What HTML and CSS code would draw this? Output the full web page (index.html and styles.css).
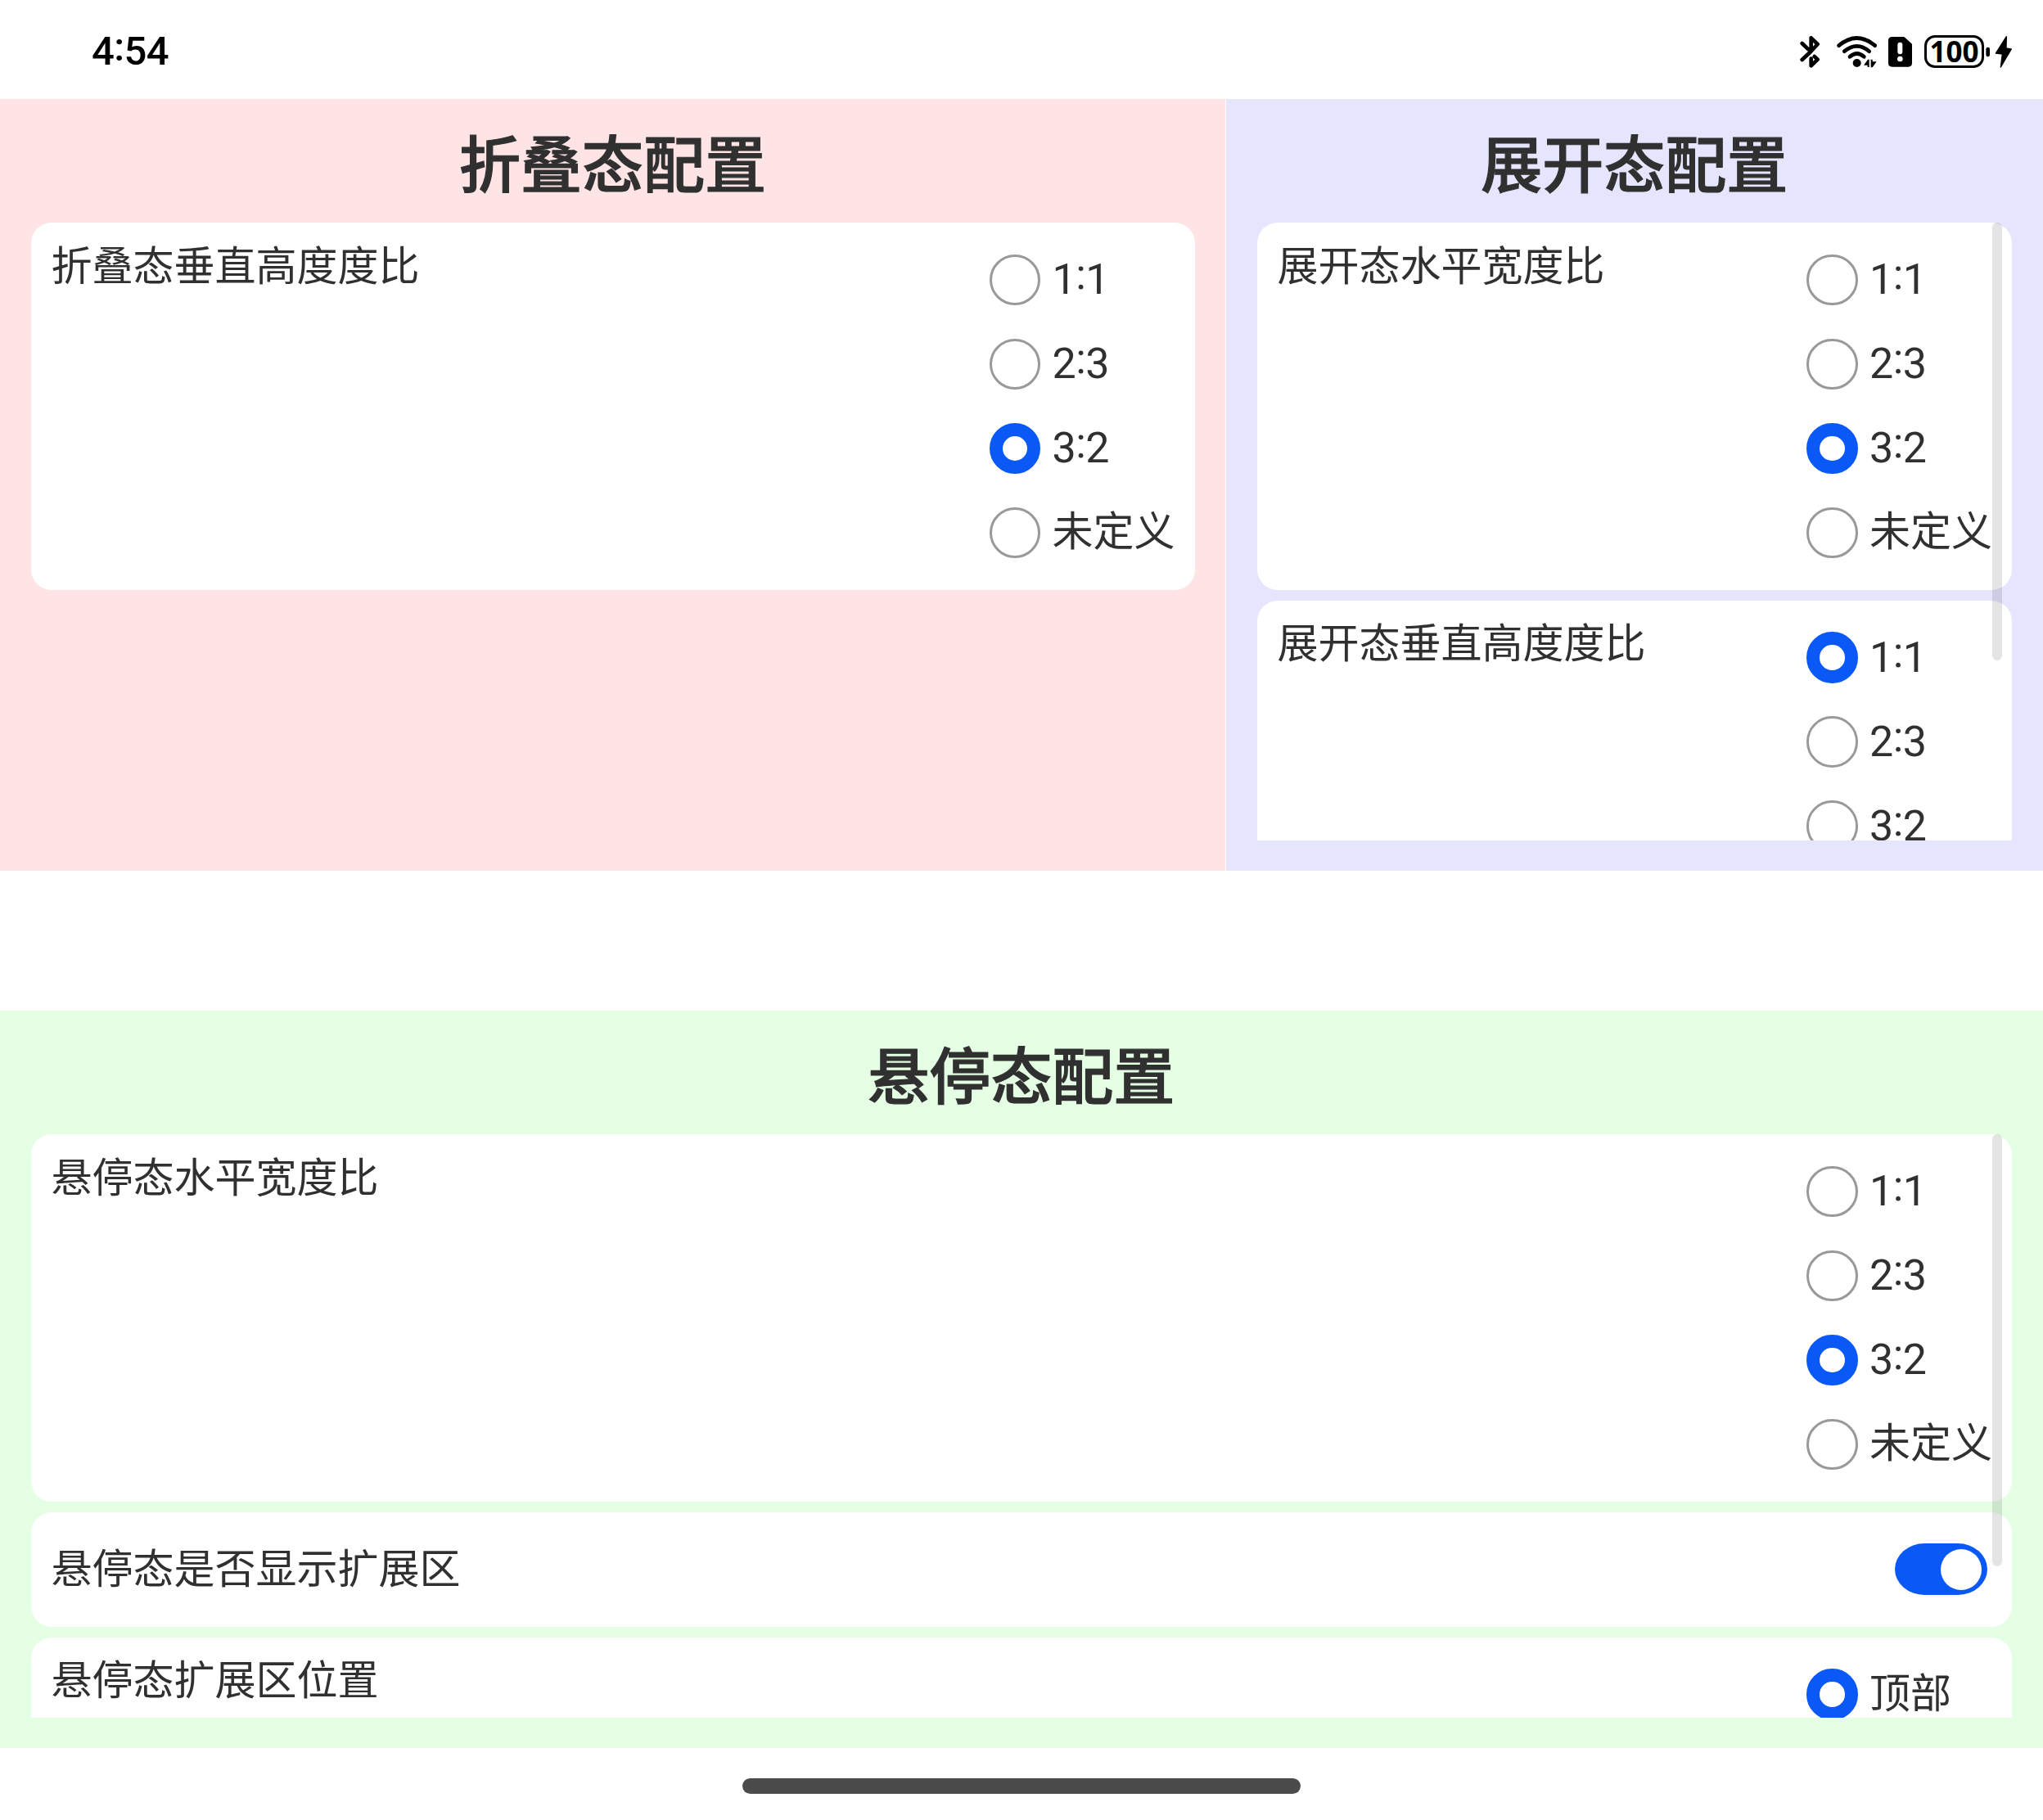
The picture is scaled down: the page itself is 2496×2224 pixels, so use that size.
FILE: index.html
```html
<!DOCTYPE html>
<html lang="zh-CN">
<head>
<meta charset="utf-8">
<title>折叠屏配置</title>
<link rel="stylesheet" href="styles.css">
</head>
<body>
<header class="status">
  <div class="time">4<span class="colon">:</span>54</div>
  <div class="icons">
    <svg class="ic-bt" viewBox="84 68 75 120"><g fill="none" stroke="#000" stroke-width="14" stroke-linecap="round" stroke-linejoin="round"><path d="M92 98 115 120M92 158 124 128 149 101 125 78V124"/><path d="M125 154V180L149 157 137 146"/></g></svg>
    <svg class="ic-wifi" viewBox="219 68 147 120"><g fill="none" stroke="#000" stroke-width="14" stroke-linecap="round"><path d="M227 106Q293 51 359 106"/><path d="M247 127Q293 89 338 127"/><path d="M267 147Q293 124 319 147"/></g><circle cx="293" cy="170" r="15"/><path d="M318 178 333 157H338V185H332V178ZM344 157H350V165H365L350 186H344Z"/></svg>
    <svg class="ic-sim" viewBox="410 68 87 120"><path fill-rule="evenodd" d="M424 74H468L497 100V170Q497 184 483 184H424Q410 184 410 170V88Q410 74 424 74ZM444 103V129Q444 138 453 138T462 129V103Q462 94 453 94T444 103ZM453 145A10 10 0 1 0 453 165A10 10 0 1 0 453 145Z"/></svg>
    <div class="battery">100</div>
    <svg class="ic-bolt" viewBox="768 68 96 120"><rect x="769" y="112" width="14" height="35" rx="7"/><path stroke="#000" stroke-width="4" stroke-linejoin="round" d="M844 73 805 134 829 137 823 185 862 119 843 116Z"/></svg>
  </div>
</header>

<main>
  <div class="top">
    <section class="panel folded">
      <h1>折叠态配置</h1>
      <div class="list">
        <div class="card">
          <div class="label">折叠态垂直高度度比</div>
          <div class="options">
            <div class="option ratio"><i class="radio"></i><span>1<b class="colon">:</b>1</span></div>
            <div class="option ratio"><i class="radio"></i><span>2<b class="colon">:</b>3</span></div>
            <div class="option ratio"><i class="radio on"></i><span>3<b class="colon">:</b>2</span></div>
            <div class="option"><i class="radio"></i><span>未定义</span></div>
          </div>
        </div>
      </div>
    </section>
    <section class="panel expanded">
      <h1>展开态配置</h1>
      <div class="list">
        <div class="card">
          <div class="label">展开态水平宽度比</div>
          <div class="options">
            <div class="option ratio"><i class="radio"></i><span>1<b class="colon">:</b>1</span></div>
            <div class="option ratio"><i class="radio"></i><span>2<b class="colon">:</b>3</span></div>
            <div class="option ratio"><i class="radio on"></i><span>3<b class="colon">:</b>2</span></div>
            <div class="option"><i class="radio"></i><span>未定义</span></div>
          </div>
        </div>
        <div class="card">
          <div class="label">展开态垂直高度度比</div>
          <div class="options">
            <div class="option ratio"><i class="radio on"></i><span>1<b class="colon">:</b>1</span></div>
            <div class="option ratio"><i class="radio"></i><span>2<b class="colon">:</b>3</span></div>
            <div class="option ratio"><i class="radio"></i><span>3<b class="colon">:</b>2</span></div>
          </div>
        </div>
        <div class="bar"></div>
      </div>
    </section>
  </div>

  <section class="panel hover">
    <h1>悬停态配置</h1>
    <div class="list">
      <div class="card">
        <div class="label">悬停态水平宽度比</div>
        <div class="options">
          <div class="option ratio"><i class="radio"></i><span>1<b class="colon">:</b>1</span></div>
          <div class="option ratio"><i class="radio"></i><span>2<b class="colon">:</b>3</span></div>
          <div class="option ratio"><i class="radio on"></i><span>3<b class="colon">:</b>2</span></div>
          <div class="option"><i class="radio"></i><span>未定义</span></div>
        </div>
      </div>
      <div class="card switch-card">
        <div class="label">悬停态是否显示扩展区</div>
        <div class="toggle"><i class="knob"></i></div>
      </div>
      <div class="card">
        <div class="label">悬停态扩展区位置</div>
        <div class="options">
          <div class="option"><i class="radio on"></i><span>顶部</span></div>
        </div>
      </div>
      <div class="bar"></div>
    </div>
  </section>
</main>

<footer class="nav"><div class="pill"></div></footer>
</body>
</html>
```

FILE: styles.css
```css
* { box-sizing: border-box; }

body {
  margin: 0;
  width: 2496px;
  height: 2224px;
  overflow: hidden;
  display: flex;
  flex-direction: column;
  background: #fff;
  color: #303030;
  font-family: Roboto, "Noto Sans CJK SC", sans-serif;
}

.colon { font-weight: inherit; line-height: 0; vertical-align: 0.11em; }

/* status bar */
.status {
  height: 121px;
  flex: none;
  display: flex;
  justify-content: space-between;
  padding: 0 38px 0 112px;
  color: #000;
}
.time { font-size: 49px; font-weight: 500; line-height: 125px; letter-spacing: -0.6px; }
.icons { display: flex; padding-top: 42.5px; height: 83px; }
.icons svg { height: 40px; flex: none; display: block; }
.ic-bt { width: 25px; }
.ic-wifi { width: 49px; margin-left: 20px; }
.ic-sim { width: 29px; margin-left: 14px; }
.battery {
  width: 73px;
  height: 40.5px;
  margin-left: 15px;
  border: 3.5px solid #000;
  border-radius: 13px;
  font: 700 35px/33px "Noto Sans", sans-serif;
  text-align: center;
}
.ic-bolt { width: 32px; margin-left: 2px; }

/* panels */
main { flex: none; height: 2014.5px; display: flex; flex-direction: column; gap: 171.5px; }
.top { display: flex; gap: 1px; height: 942.5px; flex: none; }
.panel { display: flex; flex-direction: column; padding: 37.5px 38px 36.5px 37.5px; }
.folded { width: 1497px; padding-right: 37.5px; background: #ffe4e5; }
.expanded { width: 998px; background: #e5e5fe; }
.hover { height: 900.5px; background: #e4ffe3; }
h1 {
  margin: 0 0 25px;
  height: 88.5px;
  flex: none;
  font-size: 75px;
  line-height: 88px;
  font-weight: 500;
  -webkit-text-stroke: 1.2px currentColor;
  text-align: center;
}
.list {
  position: relative;
  flex: 1;
  min-height: 0;
  overflow: hidden;
  display: flex;
  flex-direction: column;
  gap: 12.5px;
}
.card {
  flex: none;
  display: flex;
  justify-content: space-between;
  padding: 18.5px 24.5px 18.5px 25px;
  border-radius: 25px;
  background: #fff;
}
.label { font-size: 50px; line-height: 70px; }
.options { width: 226.5px; }
.option {
  height: 103px;
  display: flex;
  align-items: center;
  gap: 14.5px;
  font-size: 50px;
}
.option span { line-height: 60px; margin-top: -2px; white-space: nowrap; }
.ratio { font-size: 52px; letter-spacing: -0.5px; }
.ratio span { margin-top: 0; }
.radio {
  width: 62.5px;
  height: 62.5px;
  flex: none;
  border: 3px solid #999;
  border-radius: 50%;
}
.radio.on { border: 16px solid #0a59f7; }

.switch-card { height: 140.5px; align-items: center; padding: 0 30.5px 0 25px; }
.switch-card .label { line-height: 68px; }
.toggle {
  width: 113px;
  height: 63px;
  padding: 6.5px;
  border-radius: 36px / 31.5px;
  background: #0a59f7;
  display: flex;
  justify-content: flex-end;
}
.knob { width: 50px; height: 50px; border-radius: 50%; background: #fff; }

/* scroll indicator over the cards */
.bar {
  position: absolute;
  top: 0;
  right: 12px;
  width: 12.5px;
  height: 535px;
  border-radius: 6px;
  background: rgba(0, 0, 0, 0.105);
}
.hover .bar { height: 528px; }

/* gesture bar */
.nav { flex: 1; display: flex; justify-content: center; padding-top: 37px; }
.pill { width: 682px; height: 19px; border-radius: 9.5px; background: #4b4b4b; }
```
